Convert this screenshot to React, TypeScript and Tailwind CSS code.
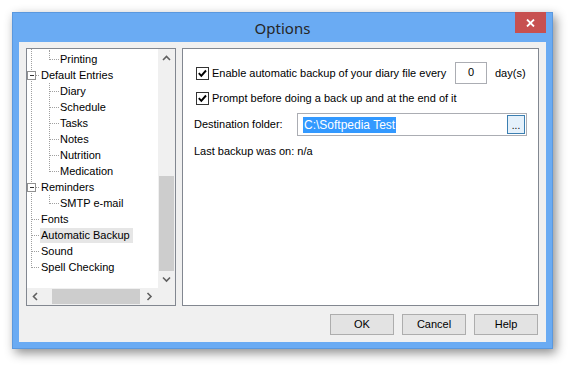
import React from "react";

type Kind = "I" | "T" | "L" | "TM";

type Row = { label: string; cells: Kind[]; selected?: boolean };

const rows: Row[] = [
  { label: "Printing", cells: ["I", "L"] },
  { label: "Default Entries", cells: ["TM"] },
  { label: "Diary", cells: ["I", "T"] },
  { label: "Schedule", cells: ["I", "T"] },
  { label: "Tasks", cells: ["I", "T"] },
  { label: "Notes", cells: ["I", "T"] },
  { label: "Nutrition", cells: ["I", "T"] },
  { label: "Medication", cells: ["I", "L"] },
  { label: "Reminders", cells: ["TM"] },
  { label: "SMTP e-mail", cells: ["I", "L"] },
  { label: "Fonts", cells: ["T"] },
  { label: "Automatic Backup", cells: ["T"], selected: true },
  { label: "Sound", cells: ["T"] },
  { label: "Spell Checking", cells: ["L"] },
];

const DOT = "#a0a0a0";

// one connector cell of the tree (dotted lines, optional minus box)
function Conn({ kind, w, x }: { kind: Kind; w: number; x: number }) {
  const vx = x + 0.5;
  return (
    <svg width={w} height={16} className="shrink-0 block">
      {kind !== "L" ? (
        <line x1={vx} y1={0} x2={vx} y2={16} stroke={DOT} strokeDasharray="1 1" />
      ) : (
        <line x1={vx} y1={0} x2={vx} y2={9} stroke={DOT} strokeDasharray="1 1" />
      )}
      {kind !== "I" && (
        <line x1={x + 1} y1={8.5} x2={w} y2={8.5} stroke={DOT} strokeDasharray="1 1" />
      )}
      {kind === "TM" && (
        <g>
          <rect x={x - 3.5} y={4.5} width={8} height={8} fill="#fff" stroke="#919191" />
          <line x1={x - 1} y1={8.5} x2={x + 3} y2={8.5} stroke="#333" />
        </g>
      )}
    </svg>
  );
}

function Chevron({ dir }: { dir: "up" | "down" | "left" | "right" }) {
  const pts = {
    up: "1,5 4.5,1.5 8,5",
    down: "1,1.5 4.5,5 8,1.5",
    left: "5,1 1.5,4.5 5,8",
    right: "1.5,1 5,4.5 1.5,8",
  }[dir];
  const horiz = dir === "up" || dir === "down";
  return (
    <svg width={horiz ? 9 : 7} height={horiz ? 7 : 9}>
      <polyline points={pts} fill="none" stroke="#606060" strokeWidth={1.6} />
    </svg>
  );
}

function Checkbox() {
  return (
    <svg width={13} height={13} className="shrink-0">
      <rect x={0.5} y={0.5} width={12} height={12} fill="#fff" stroke="#333" />
      <polyline points="2.8,6.2 5.3,8.8 10,3.5" fill="none" stroke="#000" strokeWidth={1.9} />
    </svg>
  );
}

function Tree() {
  return (
    <div className="w-[150px] h-[258px] border border-[#828790] bg-white grid grid-cols-[131px_17px] grid-rows-[239px_17px]">
      <div className="overflow-hidden">
        <svg width={60} height={2} className="block">
          <line x1={4.5} y1={0} x2={4.5} y2={2} stroke={DOT} strokeDasharray="1 1" />
          <line x1={22.5} y1={1} x2={22.5} y2={2} stroke={DOT} strokeDasharray="1 1" />
        </svg>
        {rows.map((r) => (
          <div key={r.label} className="flex h-[16px] items-center whitespace-nowrap">
            {r.cells.map((c, i) =>
              i === 0 ? <Conn key={i} kind={c} w={13} x={4} /> : <Conn key={i} kind={c} w={19} x={9} />
            )}
            <span className={`h-[15px] leading-[15px] pl-[1px] pr-[3px] ${r.selected ? "bg-[#e6e6e6]" : ""}`}>
              {r.label}
            </span>
          </div>
        ))}
      </div>
      {/* vertical scrollbar */}
      <div className="bg-[#f0f0f0] flex flex-col">
        <div className="h-[17px] flex items-center justify-center pt-[2px]">
          <Chevron dir="up" />
        </div>
        <div className="h-[110px]" />
        <div className="h-[95px] mx-[1px] bg-[#cdcdcd]" />
        <div className="flex-1 flex items-center justify-center">
          <Chevron dir="down" />
        </div>
      </div>
      {/* horizontal scrollbar */}
      <div className="bg-[#f0f0f0] flex items-center">
        <div className="w-[17px] h-full flex items-center justify-center">
          <Chevron dir="left" />
        </div>
        <div className="w-[8px]" />
        <div className="w-[88px] h-[15px] bg-[#cdcdcd]" />
        <div className="flex-1 h-full flex items-center justify-center">
          <Chevron dir="right" />
        </div>
      </div>
      <div className="bg-[#f0f0f0]" />
    </div>
  );
}

function Button({ children }: { children: React.ReactNode }) {
  return (
    <div className="w-[64px] h-[21px] border border-[#adadad] bg-[#e3e3e3] flex items-center justify-center">
      {children}
    </div>
  );
}

export default function App() {
  return (
    <div
      className="w-[573px] h-[370px] bg-white pt-[12px] pl-[12px] text-[11px] text-black"
      style={{ fontFamily: '"Liberation Sans", Arial, sans-serif' }}
    >
      <div className="w-[541px] h-[337px] border border-[#5a98de] bg-[#6aabf3] flex flex-col shadow-[3px_4px_10px_rgba(0,0,0,0.45)]">
        {/* title bar */}
        <div className="h-[29px] grid grid-cols-[1fr_auto_1fr]">
          <div />
          <div
            className="flex items-center justify-center text-[15px] text-[#262626] pt-[1px]"
            style={{ fontFamily: '"Noto Sans", "Open Sans", sans-serif' }}
          >
            Options
          </div>
          <div className="flex justify-end items-start">
            <div className="-mt-[1px] mr-[6px] w-[31px] h-[21px] bg-[#c75050] flex items-center justify-center">
              <svg width={9} height={8}>
                <path d="M1 0.5 L8 7.5 M8 0.5 L1 7.5" stroke="#fff" strokeWidth={1.8} />
              </svg>
            </div>
          </div>
        </div>

        {/* client area */}
        <div className="mx-[6px] mb-[6px] flex-1 bg-[#f0f0f0] px-[7px] pt-[6px]">
          <div className="flex gap-[6px] h-[258px]">
            <Tree />
            <div className="flex-1 border border-[#828790] bg-white pl-[11px] pt-[13px]">
              <div className="flex items-center h-[22px]">
                <div className="w-[259px] flex items-center gap-[3px] ml-[2px] whitespace-nowrap">
                  <Checkbox />
                  <span>Enable automatic backup of your diary file every</span>
                </div>
                <div className="w-[32px] h-[22px] border border-[#abadb3] bg-white flex items-center justify-center pb-[1px]">
                  0
                </div>
                <span className="ml-[8px]">day(s)</span>
              </div>
              <div className="flex items-center h-[16px] mt-[6px] ml-[2px] gap-[3px]">
                <Checkbox />
                <span>Prompt before doing a back up and at the end of it</span>
              </div>
              <div className="flex items-center h-[23px] mt-[7px]">
                <span className="w-[103px]">Destination folder:</span>
                <div className="w-[230px] h-[23px] border border-[#abadb3] bg-white flex items-center pl-[5px] pr-[1px]">
                  <span className="bg-[#3399ff] text-white text-[12px] h-[16px] leading-[16px] px-[1px]">
                    C:\Softpedia Test
                  </span>
                  <div className="ml-auto w-[18px] h-[19px] border border-[#3c7fb1] bg-[#e5f1fb] flex items-end justify-center text-[10px] leading-[12px] pb-[1px]">
                    ...
                  </div>
                </div>
              </div>
              <div className="h-[16px] mt-[7px] flex items-center">Last backup was on: n/a</div>
            </div>
          </div>
          <div className="mt-[8px] flex justify-end gap-[8px] pr-[1px]">
            <Button>OK</Button>
            <Button>Cancel</Button>
            <Button>Help</Button>
          </div>
        </div>
      </div>
    </div>
  );
}
